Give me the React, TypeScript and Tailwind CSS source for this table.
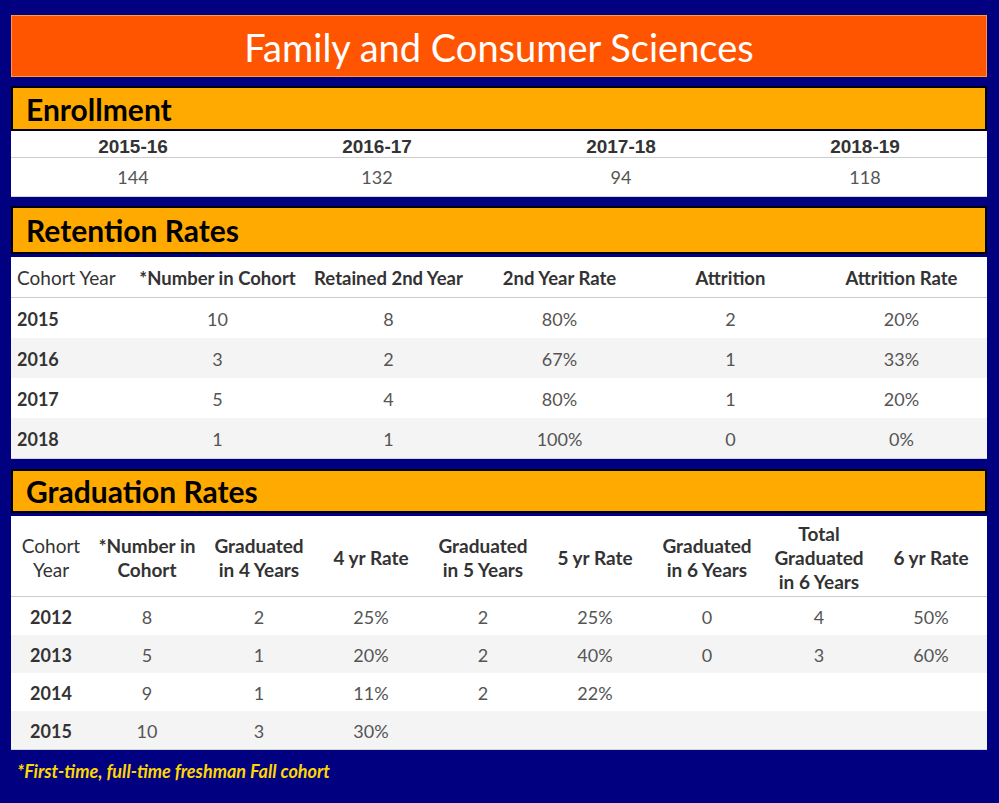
import React from "react";

const enrollment = [
  { year: "2015-16", count: 144 },
  { year: "2016-17", count: 132 },
  { year: "2017-18", count: 94 },
  { year: "2018-19", count: 118 },
];

const retentionHeaders = [
  "*Number in Cohort",
  "Retained 2nd Year",
  "2nd Year Rate",
  "Attrition",
  "Attrition Rate",
];

const retention = [
  ["2015", "10", "8", "80%", "2", "20%"],
  ["2016", "3", "2", "67%", "1", "33%"],
  ["2017", "5", "4", "80%", "1", "20%"],
  ["2018", "1", "1", "100%", "0", "0%"],
];

// header labels, split into lines
const gradHeaders = [
  ["*Number in", "Cohort"],
  ["Graduated", "in 4 Years"],
  ["4 yr Rate"],
  ["Graduated", "in 5 Years"],
  ["5 yr Rate"],
  ["Graduated", "in 6 Years"],
  ["Total", "Graduated", "in 6 Years"],
  ["6 yr Rate"],
];

const graduation = [
  ["2012", "8", "2", "25%", "2", "25%", "0", "4", "50%"],
  ["2013", "5", "1", "20%", "2", "40%", "0", "3", "60%"],
  ["2014", "9", "1", "11%", "2", "22%", "", "", ""],
  ["2015", "10", "3", "30%", "", "", "", "", ""],
];

function SectionBar({ title, className }: { title: string; className?: string }) {
  return (
    <div
      className={`flex items-center border-2 border-black bg-[#ffaa00] pl-[13px] ${className ?? ""}`}
    >
      <span className="text-[30px] font-bold leading-none text-black">{title}</span>
    </div>
  );
}

export default function App() {
  return (
    <div
      className="min-h-[803px] w-[999px] bg-[#000080] pt-[15px]"
      style={{ fontFamily: "Lato, 'Open Sans', sans-serif" }}
    >
      <div className="ml-[11px] w-[976px]">
        {/* Title */}
        <div className="flex h-[62px] items-center justify-center border border-[#ff9a40] bg-[#ff5500]">
          <h1 className="pt-[2px] text-[38px] leading-none text-white">Family and Consumer Sciences</h1>
        </div>

        {/* Enrollment */}
        <SectionBar title="Enrollment" className="mt-[9px] h-[45px]" />
        <div className="border-b border-[#d4d4d4] bg-white">
          <div className="grid h-[27px] grid-cols-4 items-center border-b border-[#cccccc]">
            {enrollment.map((e) => (
              <div
                key={e.year}
                className="pt-[2px] text-center text-[19px] font-bold text-[#333]"
                style={{ fontFamily: "'Liberation Sans', Arial, sans-serif" }}
              >
                {e.year}
              </div>
            ))}
          </div>
          <div className="grid h-[38px] grid-cols-4 items-center">
            {enrollment.map((e) => (
              <div key={e.year} className="text-center text-[18px] text-[#555]">
                {e.count}
              </div>
            ))}
          </div>
        </div>

        {/* Retention Rates */}
        <SectionBar title="Retention Rates" className="mt-[9px] h-[48px]" />
        <div className="mt-[3px] border-b border-[#d4d4d4] bg-white">
          <div className="grid h-[41px] grid-cols-[121px_repeat(5,1fr)] items-center border-b border-[#cccccc] pt-[3px]">
            <div className="pl-[6px] text-[19px] text-[#333]">Cohort Year</div>
            {retentionHeaders.map((h) => (
              <div key={h} className="text-center text-[18.5px] font-bold text-[#333]">
                {h}
              </div>
            ))}
          </div>
          {retention.map((row, i) => (
            <div
              key={row[0]}
              className={`grid h-[40px] grid-cols-[121px_repeat(5,1fr)] items-center pt-[2px] ${
                i % 2 === 1 ? "bg-[#f4f4f4]" : "bg-white"
              }`}
            >
              <div className="pl-[6px] text-[18px] font-bold text-[#333]">{row[0]}</div>
              {row.slice(1).map((v, j) => (
                <div key={j} className="text-center text-[18px] text-[#555]">
                  {v}
                </div>
              ))}
            </div>
          ))}
        </div>

        {/* Graduation Rates */}
        <SectionBar title="Graduation Rates" className="mt-[10px] h-[44px]" />
        <div className="mt-[3px] border-b border-[#d4d4d4] bg-white">
          <div className="grid h-[81px] grid-cols-[80px_repeat(8,1fr)] items-center border-b border-[#cccccc] pt-[4px]">
            <div className="text-center text-[19px] leading-[24px] text-[#333]">
              <div>Cohort</div>
              <div>Year</div>
            </div>
            {gradHeaders.map((lines, i) => (
              <div key={i} className="text-center text-[19px] font-bold leading-[24px] text-[#333]">
                {lines.map((l) => (
                  <div key={l}>{l}</div>
                ))}
              </div>
            ))}
          </div>
          {graduation.map((row, i) => (
            <div
              key={row[0]}
              className={`grid h-[38px] grid-cols-[80px_repeat(8,1fr)] items-center pt-[3px] ${
                i % 2 === 1 ? "bg-[#f4f4f4]" : "bg-white"
              }`}
            >
              <div className="text-center text-[18px] font-bold text-[#333]">{row[0]}</div>
              {row.slice(1).map((v, j) => (
                <div key={j} className="text-center text-[18px] text-[#555]">
                  {v}
                </div>
              ))}
            </div>
          ))}
        </div>

        {/* Footnote */}
        <p className="mt-[8px] pl-[6px] text-[18px] font-bold italic text-[#ffd700]">
          *First-time, full-time freshman Fall cohort
        </p>
      </div>
    </div>
  );
}
